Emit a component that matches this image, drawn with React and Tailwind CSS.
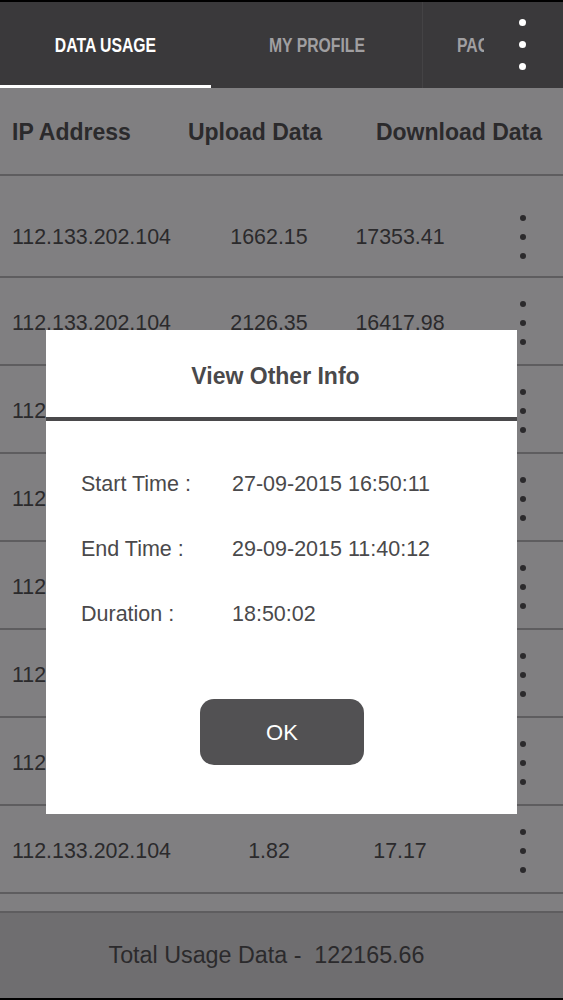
import React from "react";

const rows = [
  ["112.133.202.104", "1662.15", "17353.41"],
  ["112.133.202.104", "2126.35", "16417.98"],
  ["112.133.202.104", "1845.20", "15322.76"],
  ["112.133.202.104", "1320.44", "14210.09"],
  ["112.133.202.104", "987.63", "12873.51"],
  ["112.133.202.104", "1502.18", "13344.26"],
  ["112.133.202.104", "765.90", "9870.44"],
  ["112.133.202.104", "1.82", "17.17"],
];

function Dots({ color = "bg-[#2b2a2c]", size = "w-[6px] h-[6px]", gap = "gap-[13px]" }) {
  return (
    <div className={`flex flex-col items-center ${gap}`}>
      <span className={`${size} rounded-full ${color}`} />
      <span className={`${size} rounded-full ${color}`} />
      <span className={`${size} rounded-full ${color}`} />
    </div>
  );
}

function Row({ ip, up, down, first }) {
  return (
    <div
      className={`flex items-center border-b-2 border-[#5e5d5f] text-[21.4px] text-[#2b2a2c] ${
        first ? "h-[102px] pt-[22px]" : "h-[88px] pt-[4px]"
      }`}
    >
      <div className="w-[198px] pl-[12px] whitespace-nowrap">{ip}</div>
      <div className="w-[142px] text-center">{up}</div>
      <div className="w-[120px] text-center">{down}</div>
      <div className="flex-1 flex justify-start pl-[60px]">
        <Dots />
      </div>
    </div>
  );
}

const tabFont =
  "font-['Liberation_Sans',Arial,sans-serif] font-bold text-[21px] inline-block scale-x-[0.75] whitespace-nowrap";

export default function App() {
  return (
    <div className="relative w-[563px] h-[1000px] overflow-hidden bg-black font-['Liberation_Sans',Arial,sans-serif]">
      <div className="h-[2px] bg-black" />
      {/* Tab bar */}
      <div className="relative flex h-[86px] bg-[#3a393b]">
        <div className="relative w-[211px] flex items-center justify-center">
          <span className={`${tabFont} text-white`}>DATA USAGE</span>
          <div className="absolute left-0 right-0 bottom-0 h-[3px] bg-white" />
        </div>
        <div className="w-[211px] flex items-center justify-center">
          <span className={`${tabFont} text-[#a09fa1]`}>MY PROFILE</span>
        </div>
        <div className="w-[1px] bg-[#444345]" />
        <div className="flex-1 flex items-center">
          <div className="ml-[34px] w-[27px] overflow-hidden">
            <span className={`${tabFont} text-[#a09fa1] origin-left`}>PAGES</span>
          </div>
          <div className="ml-[35px] pb-[2px]">
            <Dots color="bg-white" size="w-[7px] h-[7px]" gap="gap-[15px]" />
          </div>
        </div>
      </div>

      {/* Table */}
      <div className="bg-[#807f81]">
        <div className="flex items-center h-[88px] border-b-2 border-[#5e5d5f] font-bold text-[23px] text-[#2b2a2c] pt-[2px]">
          <div className="w-[175px] pl-[12px] whitespace-nowrap">IP Address</div>
          <div className="w-[160px] text-center whitespace-nowrap">Upload Data</div>
          <div className="flex-1 text-center whitespace-nowrap pl-[20px]">Download Data</div>
        </div>
        {rows.map((r, i) => (
          <Row key={i} ip={r[0]} up={r[1]} down={r[2]} first={i === 0} />
        ))}
        <div className="h-[19px] border-b-2 border-[#5e5d5f]" />
      </div>

      {/* Footer */}
      <div className="flex h-[85px] items-center justify-center bg-[#6f6e70] text-[23.3px] text-[#2b2a2c] whitespace-pre pr-[30px]">
        {"Total Usage Data -  122165.66"}
      </div>
      <div className="h-[2px] bg-black" />

      {/* Modal */}
      <div className="absolute left-[46px] top-[330px] w-[471px] h-[484px] bg-white flex flex-col">
        <div className="h-[87px] flex items-center justify-center pt-[5px] pr-[12px] font-bold text-[23px] text-[#4a494b]">
          View Other Info
        </div>
        <div className="h-[4px] bg-[#4a494b]" />
        <div className="pt-[31px] pl-[35px] text-[21.5px] text-[#4a494b]">
          <div className="flex items-center h-[65px]">
            <div className="w-[151px]">Start Time :</div>
            <div>27-09-2015 16:50:11</div>
          </div>
          <div className="flex items-center h-[65px]">
            <div className="w-[151px]">End Time :</div>
            <div>29-09-2015 11:40:12</div>
          </div>
          <div className="flex items-center h-[65px]">
            <div className="w-[151px]">Duration :</div>
            <div>18:50:02</div>
          </div>
        </div>
        <div className="flex justify-center mt-[52px] pl-[1px]">
          <button className="w-[164px] h-[66px] rounded-[14px] bg-[#525153] text-white text-[22px]">
            OK
          </button>
        </div>
      </div>
    </div>
  );
}
